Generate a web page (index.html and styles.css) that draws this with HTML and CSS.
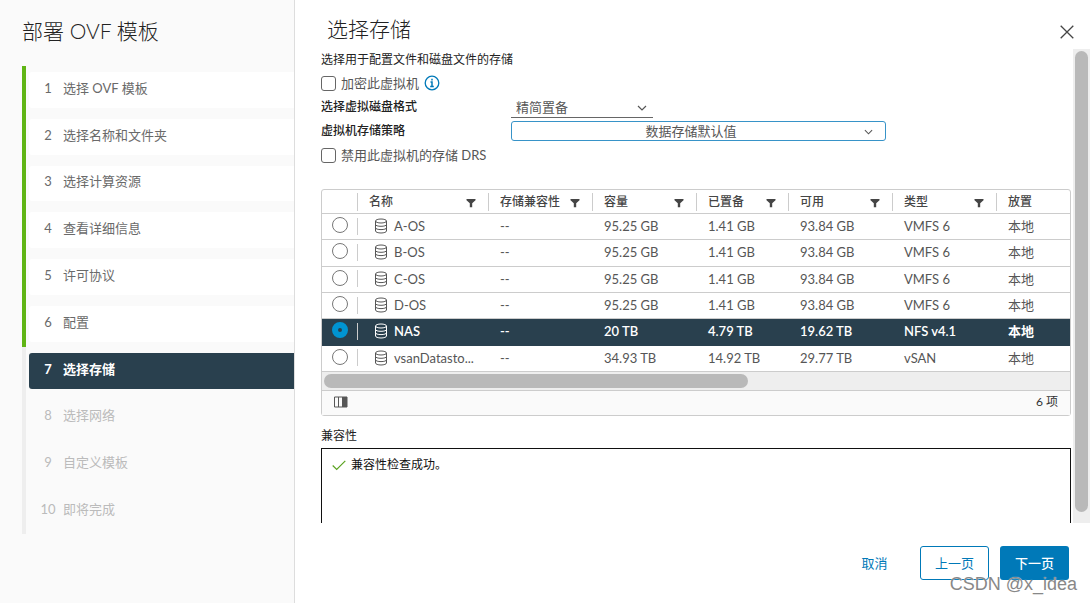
FILE: index.html
```html
<!DOCTYPE html>
<html lang="zh-CN">
<head>
<meta charset="utf-8">
<title>部署 OVF 模板</title>
<link rel="stylesheet" href="styles.css">
</head>
<body>
<svg class="sprite" aria-hidden="true">
  <symbol id="filter" viewBox="0 0 10 10"><path d="M0.5 1h9v1.2L6.2 5.2V9.3H3.8V5.2L0.5 2.2z" fill="#454545"/></symbol>
  <symbol id="datastore" viewBox="0 0 14 16"><g fill="none" stroke="currentColor"><ellipse cx="7" cy="3" rx="5.5" ry="2"/><path d="M1.5 3v10c0 1.1 2.5 2 5.5 2s5.500-.9 5.500-2V3M1.500 6.500c0 1.100 2.500 1.800 5.500 1.800s5.500-.7 5.500-1.800M1.500 9.800c0 1.100 2.500 1.800 5.500 1.800s5.500-.7 5.500-1.800"/></g></symbol>
  <symbol id="chevron" viewBox="0 0 10 6"><path d="M1 1l4 4 4-4" fill="none" stroke="#565656" stroke-width="1.2"/></symbol>
</svg>
<div class="wizard">
  <nav class="sidebar">
    <h1 class="sidebar-title">部署 OVF 模板</h1>
    <ol class="steps">
      <li class="step done"><span class="step-box"><span class="step-no">1</span>选择 OVF 模板</span></li>
      <li class="step done"><span class="step-box"><span class="step-no">2</span>选择名称和文件夹</span></li>
      <li class="step done"><span class="step-box"><span class="step-no">3</span>选择计算资源</span></li>
      <li class="step done"><span class="step-box"><span class="step-no">4</span>查看详细信息</span></li>
      <li class="step done"><span class="step-box"><span class="step-no">5</span>许可协议</span></li>
      <li class="step done"><span class="step-box"><span class="step-no">6</span>配置</span></li>
      <li class="step current"><span class="step-box"><span class="step-no">7</span>选择存储</span></li>
      <li class="step"><span class="step-box"><span class="step-no">8</span>选择网络</span></li>
      <li class="step"><span class="step-box"><span class="step-no">9</span>自定义模板</span></li>
      <li class="step"><span class="step-box"><span class="step-no">10</span>即将完成</span></li>
    </ol>
  </nav>
  <main class="main">
    <header class="header">
      <h2 class="title">选择存储</h2>
      <button class="close" type="button" aria-label="关闭"><svg width="14" height="14" viewBox="0 0 14 14"><path d="M0.700 0.700l12.600 12.600M13.300 0.700L0.700 13.300" stroke="#454545" stroke-width="1.300"/></svg></button>
    </header>
    <div class="body">
      <div class="content">
        <p class="intro">选择用于配置文件和磁盘文件的存储</p>
        <div class="row check-row">
          <input class="check" type="checkbox" id="encrypt"><label for="encrypt">加密此虚拟机</label>
          <svg class="info" width="16" height="16" viewBox="0 0 16 16"><circle cx="8" cy="8" r="6.800" fill="none" stroke="#0079b8" stroke-width="1.300"/><path d="M8 3.700v1.800M6.500 7H8v4.500M6.200 11.600h3.600" fill="none" stroke="#0079b8" stroke-width="1.500"/></svg>
        </div>
        <div class="row field">
          <label class="field-label" for="format">选择虚拟磁盘格式</label>
          <span class="select-wrap format"><select class="select" id="format"><option>精简置备</option></select><svg class="chevron" width="10" height="6"><use href="#chevron"/></svg></span>
        </div>
        <div class="row field">
          <label class="field-label" for="policy">虚拟机存储策略</label>
          <span class="select-wrap policy"><select class="select" id="policy"><option>数据存储默认值</option></select><svg class="chevron" width="9" height="6"><use href="#chevron"/></svg></span>
        </div>
        <div class="row check-row">
          <input class="check" type="checkbox" id="drs"><label for="drs">禁用此虚拟机的存储 DRS</label>
        </div>
        <section class="grid">
          <table class="table">
            <colgroup><col class="c-pick"><col class="c-name"><col class="c-std"><col class="c-std"><col class="c-prov"><col class="c-std"><col class="c-std"><col></colgroup>
            <thead><tr>
              <th></th>
              <th><div class="head">名称<svg width="10" height="10"><use href="#filter"/></svg></div></th>
              <th><div class="head">存储兼容性<svg width="10" height="10"><use href="#filter"/></svg></div></th>
              <th><div class="head">容量<svg width="10" height="10"><use href="#filter"/></svg></div></th>
              <th><div class="head">已置备<svg width="10" height="10"><use href="#filter"/></svg></div></th>
              <th><div class="head">可用<svg width="10" height="10"><use href="#filter"/></svg></div></th>
              <th><div class="head">类型<svg width="10" height="10"><use href="#filter"/></svg></div></th>
              <th><div class="head">放置</div></th>
            </tr></thead>
            <tbody>
              <tr><td class="pick"><input class="radio" type="radio" name="ds" aria-label="A-OS"></td><td><div class="name"><svg width="14" height="16"><use href="#datastore"/></svg>A-OS</div></td><td>--</td><td>95.25 GB</td><td>1.41 GB</td><td>93.84 GB</td><td>VMFS 6</td><td>本地</td></tr>
              <tr><td class="pick"><input class="radio" type="radio" name="ds" aria-label="B-OS"></td><td><div class="name"><svg width="14" height="16"><use href="#datastore"/></svg>B-OS</div></td><td>--</td><td>95.25 GB</td><td>1.41 GB</td><td>93.84 GB</td><td>VMFS 6</td><td>本地</td></tr>
              <tr><td class="pick"><input class="radio" type="radio" name="ds" aria-label="C-OS"></td><td><div class="name"><svg width="14" height="16"><use href="#datastore"/></svg>C-OS</div></td><td>--</td><td>95.25 GB</td><td>1.41 GB</td><td>93.84 GB</td><td>VMFS 6</td><td>本地</td></tr>
              <tr><td class="pick"><input class="radio" type="radio" name="ds" aria-label="D-OS"></td><td><div class="name"><svg width="14" height="16"><use href="#datastore"/></svg>D-OS</div></td><td>--</td><td>95.25 GB</td><td>1.41 GB</td><td>93.84 GB</td><td>VMFS 6</td><td>本地</td></tr>
              <tr class="selected"><td class="pick"><input class="radio" type="radio" name="ds" aria-label="NAS" checked></td><td><div class="name"><svg width="14" height="16"><use href="#datastore"/></svg>NAS</div></td><td>--</td><td>20 TB</td><td>4.79 TB</td><td>19.62 TB</td><td>NFS v4.1</td><td>本地</td></tr>
              <tr><td class="pick"><input class="radio" type="radio" name="ds" aria-label="vsanDatastore"></td><td><div class="name"><svg width="14" height="16"><use href="#datastore"/></svg>vsanDatasto...</div></td><td>--</td><td>34.93 TB</td><td>14.92 TB</td><td>29.77 TB</td><td>vSAN</td><td>本地</td></tr>
            </tbody>
          </table>
          <div class="hscroll"><div class="hthumb"></div></div>
          <div class="grid-foot">
            <button class="columns" type="button" aria-label="列"><svg width="14" height="12" viewBox="0 0 14 12"><path d="M0.500 1h12.500v10H0.500zM4.500 1v10M8.500 1v10" fill="none" stroke="#565656"/><path d="M9 1h4v10H9z" fill="#565656"/></svg></button>
            <span>6 项</span>
          </div>
        </section>
        <p class="compat-label">兼容性</p>
        <div class="compat">
          <svg width="14" height="11" viewBox="0 0 14 11"><path d="M0.700 5.500l4 4L13.300 0.800" fill="none" stroke="#5aa220" stroke-width="1.200"/></svg>
          <span>兼容性检查成功。</span>
        </div>
      </div>
      <div class="vscroll"><div class="vthumb"></div></div>
    </div>
    <footer class="footer">
      <button class="btn link" type="button">取消</button>
      <button class="btn outline" type="button">上一页</button>
      <button class="btn primary" type="button">下一页</button>
    </footer>
  </main>
  <span class="watermark">CSDN @x_idea</span>
</div>
</body>
</html>
```
FILE: styles.css
```css
* { box-sizing: border-box; }
body {
  margin: 0;
  font-family: Lato, "Noto Sans CJK SC", sans-serif;
  font-size: 13px;
  line-height: 16px;
  color: #565656;
  background: #fff;
}
h1, h2, p, ol { margin: 0; padding: 0; font-weight: 300; }
button, select, input { font: inherit; color: inherit; margin: 0; padding: 0; }
button { border: 0; background: none; }
svg { display: block; flex: none; }
.sprite { position: absolute; width: 0; height: 0; }

.wizard {
  position: relative;
  display: grid;
  grid-template-columns: 295px 1fr;
  height: 100vh;
  overflow: hidden;
}
.sidebar {
  background: #fafafa;
  border-right: 1px solid #ddd;
  padding: 17px 0 0 22px;
}
.sidebar-title { font-size: 21px; line-height: 28px; color: #222; margin-bottom: 21px; }
.steps { list-style: none; display: flex; flex-direction: column; height: 468px; font-weight: 400; }
.step { flex: 1; display: flex; padding: 6px 0 5px 3px; border-left: 4px solid #eee; color: #bbb; }
.step-box { flex: 1; display: flex; align-items: center; padding-bottom: 4px; border-radius: 3px 0 0 3px; }
.step-no { width: 26px; margin-right: 8px; padding-left: 12px; display: flex; justify-content: center; }
.step.done { border-left-color: #60b515; color: #6a6a6a; }
.step.done .step-box { background: #fff; }
.step.current { color: #fff; font-weight: 700; }
.step.current .step-box { background: #29404e; }

.main { display: flex; flex-direction: column; min-width: 0; min-height: 0; }
.header { display: flex; justify-content: space-between; padding: 15px 16px 0 32px; height: 49px; }
.title { font-size: 21px; line-height: 28px; color: #222; }
.close { height: 34px; }

.body { flex: 1; min-height: 0; display: flex; }
.content { flex: 1; min-width: 0; padding: 0 2px 0 26px; overflow: hidden; display: flex; flex-direction: column; }
.intro { font-size: 12px; line-height: 22px; font-weight: 400; color: #222; }
.row { display: flex; align-items: center; }
.check-row { height: 24px; gap: 5px; }
.check { appearance: none; width: 15px; height: 15px; border: 1px solid #666; border-radius: 3px; background: #fff; }
.field { height: 24px; }
.field-label { width: 190px; font-size: 12px; font-weight: 500; color: #222; }
.select-wrap { position: relative; display: block; }
.select { appearance: none; display: block; width: 100%; border: 0; background: none; padding: 0 5px; height: 20px; outline: 0; }
.format { width: 142px; border-bottom: 1px solid #666; }
.policy { width: 375px; }
.policy .select { border: 1px solid #3793c8; border-radius: 3px; text-align-last: center; padding-right: 20px; }
.chevron { position: absolute; right: 6px; top: 8px; pointer-events: none; }
.policy .chevron { right: 13px; }

.grid { margin-top: 22px; border: 1px solid #ccc; border-radius: 3px; }
.table { width: 100%; height: 182px; table-layout: fixed; border-collapse: separate; border-spacing: 0; }
.c-pick { width: 35px; }
.c-name { width: 131px; }
.c-std { width: 104px; }
.c-prov { width: 92px; }
.table th { height: 24px; padding: 0; font-size: 12px; font-weight: 500; text-align: left; color: #454545; border-bottom: 1px solid #ccc; }
.head { display: flex; align-items: center; justify-content: space-between; height: 18px; padding: 0 12px 0 11px; border-left: 1px solid #ccc; }
.head svg { margin-top: 3px; }
.table td { height: 26px; padding: 0 0 1px 12px; white-space: nowrap; border-bottom: 1px solid #ccc; }
.table td.pick { padding: 0 0 3px 10px; }
.radio { appearance: none; display: block; width: 16px; height: 16px; border: 1px solid #777; border-radius: 50%; background: #fff; }
.radio:checked { border: 6px solid #0094d2; background: #29404e; }
.name { display: flex; align-items: center; gap: 6px; height: 17px; margin-left: -12px; padding-left: 16px; border-left: 1px solid #ccc; }
.selected td { background: #29404e; border-color: #29404e; color: #fff; font-weight: 600; }
.hscroll { padding: 2px; background: #eee; border-bottom: 1px solid #ccc; }
.hthumb { width: 57%; height: 14px; border-radius: 7px; background: #b9b9b9; }
.grid-foot { display: flex; align-items: center; justify-content: space-between; height: 24px; padding: 0 12px 2px; background: #fafafa; color: #333; font-size: 12px; }

.compat-label { margin-top: 12px; font-size: 12px; font-weight: 400; color: #222; }
.compat { flex: 1; margin-top: 4px; padding: 8px 10px; border: 1px solid #111; border-bottom: 0; display: flex; align-items: flex-start; gap: 5px; font-size: 12px; color: #111; }
.compat svg { margin-top: 3px; }
.vscroll { width: 17px; padding: 2px; background: #eee; }
.vthumb { height: 98%; border-radius: 7px; background: #b9b9b9; }

.footer { height: 80px; padding: 23px 21px 0; display: flex; justify-content: flex-end; gap: 11px; }
.btn { width: 69px; height: 34px; border-radius: 3px; border: 1px solid transparent; color: #0079b8; }
.btn.outline { border-color: #0079b8; }
.btn.primary { background: #0079b8; color: #fff; font-weight: 500; }
.watermark { position: absolute; right: 13px; bottom: 6px; font-family: "Liberation Sans", Arial, sans-serif; font-size: 18px; line-height: 26px; color: #888; text-shadow: 0 0 1px #fff; pointer-events: none; }
```
